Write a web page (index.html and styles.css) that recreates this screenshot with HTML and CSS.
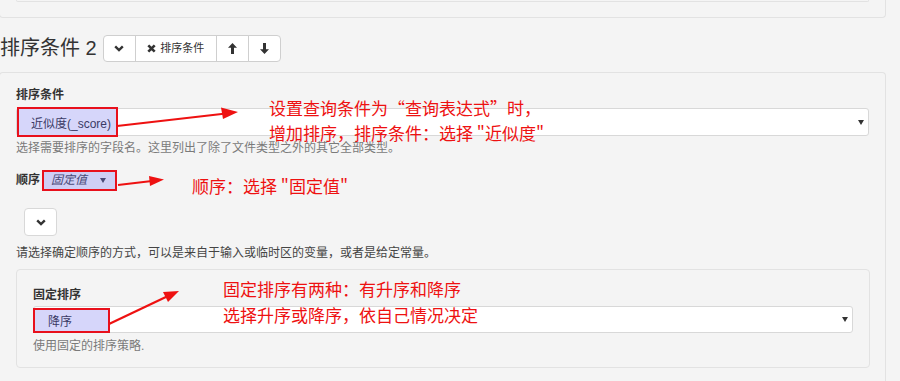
FILE: index.html
```html
<!DOCTYPE html>
<html lang="zh">
<head>
<meta charset="utf-8">
<link rel="stylesheet" href="styles.css">
</head>
<body>
<div class="page">
  <div class="panel panel-top"><div class="top-inner"></div></div>

  <div class="head-row">
    <h2 class="title">排序条件 2</h2>
    <div class="btn-group">
      <button class="btn btn-icon"><svg width="10" height="7" viewBox="0 0 10 7"><path d="M1.2 1.3 L5 5 L8.8 1.3" fill="none" stroke="#333" stroke-width="2.4"/></svg></button>
      <button class="btn btn-text"><svg width="9" height="9" viewBox="0 0 9 9"><path d="M1.3 1.3 L7.7 7.7 M7.7 1.3 L1.3 7.7" stroke="#333" stroke-width="2.6"/></svg><span>排序条件</span></button>
      <button class="btn btn-icon"><svg width="9" height="11" viewBox="0 0 9 11"><polygon points="4.5,0 9,4.8 6,4.8 6,11 3,11 3,4.8 0,4.8" fill="#333"/></svg></button>
      <button class="btn btn-icon"><svg width="9" height="11" viewBox="0 0 9 11"><polygon points="4.5,11 9,6.2 6,6.2 6,0 3,0 3,6.2 0,6.2" fill="#333"/></svg></button>
    </div>
  </div>

  <div class="panel panel-main">
    <div class="label">排序条件</div>
    <div class="select">
      <span class="hl hl-field">近似度(_score)</span>
      <span class="caret"></span>
    </div>
    <div class="help">选择需要排序的字段名。这里列出了除了文件类型之外的其它全部类型。</div>

    <div class="order-row">
      <span class="label">顺序</span>
      <span class="mini-select"><em>固定值</em><span class="mini-caret"></span></span>
    </div>

    <button class="btn btn-single"><svg width="10" height="7" viewBox="0 0 10 7"><path d="M1.2 1.3 L5 5 L8.8 1.3" fill="none" stroke="#333" stroke-width="2.4"/></svg></button>

    <div class="help help-dark">请选择确定顺序的方式，可以是来自于输入或临时区的变量，或者是给定常量。</div>

    <div class="panel panel-inner">
      <div class="label">固定排序</div>
      <div class="select select-inner">
        <span class="hl hl-order">降序</span>
        <span class="caret"></span>
      </div>
      <div class="help">使用固定的排序策略.</div>
    </div>
  </div>

  <div class="notes">
    <svg class="arrows" width="900" height="381" viewBox="0 0 900 381">
      <g stroke="#ee1111" stroke-width="2.2" fill="none">
        <line x1="117" y1="126" x2="226" y2="113.5"/>
        <line x1="118" y1="185" x2="152" y2="181"/>
        <line x1="109" y1="324" x2="168" y2="296"/>
      </g>
      <g fill="#ee1111">
        <polygon points="238,112 221,107.5 223,119"/>
        <polygon points="164,179.5 149,176 150,186"/>
        <polygon points="179,291 163,292 168,302"/>
      </g>
    </svg>
    <div class="note note-1"><div>设置查询条件为“查询表达式”时，</div><div>增加排序，排序条件：选择 "近似度"</div></div>
    <div class="note note-2"><div>顺序：选择 "固定值"</div></div>
    <div class="note note-3"><div>固定排序有两种：有升序和降序</div><div>选择升序或降序，依自己情况决定</div></div>
  </div>
</div>
</body>
</html>
```

FILE: styles.css
```css
* { box-sizing: border-box; }
html, body { margin: 0; padding: 0; }
body {
  background: #f4f4f4;
  font-family: "Liberation Sans", "Noto Sans CJK SC", sans-serif;
  color: #333;
  width: 900px;
  height: 381px;
  overflow: hidden;
}
.page { position: relative; width: 900px; height: 381px; overflow: hidden; }

.panel {
  border: 1px solid #e2e2e2;
  border-radius: 4px;
  background: #f4f4f4;
}
.panel-top {
  margin-left: -1px;
  width: 887px;
  height: 18px;
  border-top: 0;
  border-radius: 0 0 4px 4px;
}
.top-inner {
  margin: 0 16px 0 16px;
  height: 2px;
  border: 1px solid #e2e2e2;
  border-top: 0;
  border-radius: 0 0 3px 3px;
}

.head-row {
  display: flex;
  align-items: center;
  padding-top: 17px;
  height: 44px;
  margin-bottom: 10px;
}
.title {
  margin: 0 6px 0 0;
  font-weight: normal;
  font-size: 20px;
  line-height: 27px;
  color: #333;
  font-family: "Liberation Sans", "Noto Sans CJK SC", sans-serif;
}
.btn-group { display: flex; height: 27px; }
.btn {
  display: flex;
  align-items: center;
  justify-content: center;
  background: #fff;
  border: 1px solid #cfcfcf;
  height: 27px;
  padding: 0;
  margin: 0;
  font-family: inherit;
  color: #333;
}
.btn-group .btn { border-radius: 0; }
.btn-group .btn + .btn { margin-left: -1px; }
.btn-group .btn:first-child { border-radius: 4px 0 0 4px; }
.btn-group .btn:last-child { border-radius: 0 4px 4px 0; }
.btn-icon { width: 33px; }
.btn-text { width: 82px; font-size: 11px; gap: 4px; }
.btn-text span { line-height: 13px; }

.panel-main {
  margin-left: -1px;
  width: 887px;
  height: 309px;
  border-bottom: 0;
  border-radius: 4px 4px 0 0;
  padding: 15px 16px 0 16px;
}
.label {
  font-weight: bold;
  font-size: 12px;
  line-height: 14px;
  color: #333;
}
.select {
  margin-top: 6px;
  height: 28px;
  width: 853px;
  background: #fff;
  border: 1px solid #d8d8d8;
  border-radius: 3px;
  display: flex;
  align-items: center;
  justify-content: space-between;
  padding-right: 4px;
}
.caret {
  width: 0; height: 0;
  border-left: 3px solid transparent;
  border-right: 3px solid transparent;
  border-top: 5px solid #333;
}
.hl {
  align-self: stretch;
  display: flex;
  align-items: center;
  flex-shrink: 0;
  white-space: nowrap;
  background: #d6d6fa;
  border: 2px solid #e8101c;
  color: #3b3b66;
  font-size: 12px;
}
.hl-field {
  width: 101px;
  height: 30px;
  margin: -2px 0 -2px 0;
  padding-left: 12px;
}
.help {
  margin-top: 6px;
  font-size: 12px;
  line-height: 12px;
  color: #7a7a7a;
  white-space: nowrap;
}
.help-dark { color: #444; margin-top: 11px; }

.order-row {
  display: flex;
  align-items: center;
  margin-top: 16px;
  height: 20px;
}
.order-row .label { margin-right: 2px; }
.mini-select {
  display: flex;
  align-items: center;
  justify-content: space-between;
  width: 75px;
  height: 21px;
  background: #cfcff5;
  border: 2px solid #e8101c;
  padding: 0 9px 0 7px;
}
.mini-select em {
  font-size: 12px;
  color: #4a4a78;
  font-style: italic;
  line-height: 14px;
}
.mini-caret {
  width: 0; height: 0;
  border-left: 3px solid transparent;
  border-right: 3px solid transparent;
  border-top: 5px solid #4a4a78;
}

.btn-single {
  margin: 18px 0 0 8px;
  width: 33px;
  height: 28px;
  border-radius: 4px;
  border-color: #d8d8d8;
}

.panel-inner {
  margin-top: 10px;
  width: 854px;
  height: 99px;
  padding: 18px 16px 0 16px;
  border-radius: 4px;
}
.select-inner {
  width: 820px;
  height: 27px;
  margin-top: 4px;
}
.hl-order {
  width: 77px;
  margin: 1px 0 -1px -1px;
  padding-left: 13px;
}
.panel-inner .help { margin-top: 7px; }

.notes {
  position: absolute;
  left: 0; top: 0;
  width: 900px; height: 381px;
  pointer-events: none;
}
.arrows { position: absolute; left: 0; top: 0; }
.note {
  position: absolute;
  color: #ee1111;
  font-family: "Noto Sans CJK SC", sans-serif;
  font-size: 17px;
  line-height: 17px;
  white-space: nowrap;
  display: flex;
  flex-direction: column;
  gap: 9px;
}
.note-1 { left: 269px; top: 99px; gap: 8px; }
.note-2 { left: 192px; top: 177px; }
.note-3 { left: 223px; top: 280px; }
```
